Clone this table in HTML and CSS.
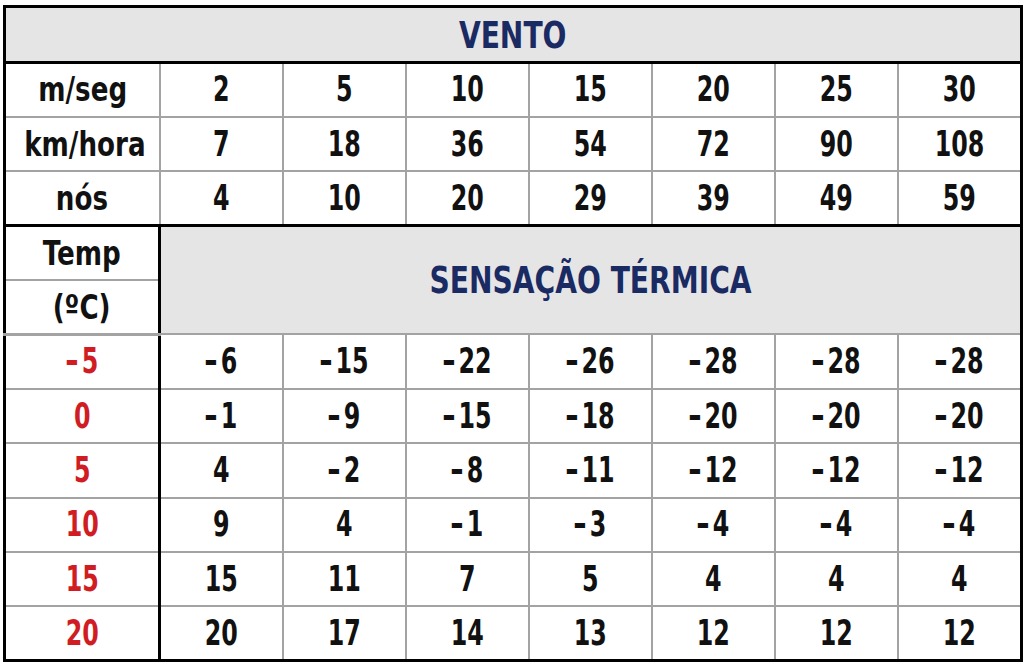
FILE: index.html
```html
<!DOCTYPE html>
<html lang="pt">
<head>
<meta charset="utf-8">
<title>Vento - Sensação Térmica</title>
<link rel="stylesheet" href="styles.css">
</head>
<body>
<table class="wind">
  <colgroup>
    <col class="c-label">
    <col class="c-val"><col class="c-val"><col class="c-val"><col class="c-val"><col class="c-val"><col class="c-val"><col class="c-last">
  </colgroup>
  <tr class="row head-row">
    <th colspan="8" class="title-cell thick-bottom"><span class="sq title">VENTO</span></th>
  </tr>
  <tr class="row">
    <th class="lbl"><span class="sq lab">m/seg</span></th>
    <td><span class="sq">2</span></td><td><span class="sq">5</span></td><td><span class="sq">10</span></td><td><span class="sq">15</span></td><td><span class="sq">20</span></td><td><span class="sq">25</span></td><td><span class="sq">30</span></td>
  </tr>
  <tr class="row">
    <th class="lbl"><span class="sq lab">km/hora</span></th>
    <td><span class="sq">7</span></td><td><span class="sq">18</span></td><td><span class="sq">36</span></td><td><span class="sq">54</span></td><td><span class="sq">72</span></td><td><span class="sq">90</span></td><td><span class="sq">108</span></td>
  </tr>
  <tr class="row thick-row">
    <th class="lbl"><span class="sq lab">nós</span></th>
    <td><span class="sq">4</span></td><td><span class="sq">10</span></td><td><span class="sq">20</span></td><td><span class="sq">29</span></td><td><span class="sq">39</span></td><td><span class="sq">49</span></td><td><span class="sq">59</span></td>
  </tr>
  <tr class="row">
    <th class="lbl divide"><span class="sq lab">Temp</span></th>
    <th colspan="7" rowspan="2" class="title-cell"><span class="sq title">SENSAÇÃO TÉRMICA</span></th>
  </tr>
  <tr class="row unit-row">
    <th class="lbl divide"><span class="sq lab">(ºC)</span></th>
  </tr>
  <tr class="row">
    <th class="lbl divide red"><span class="sq"><span class="m">-</span>5</span></th>
    <td><span class="sq"><span class="m">-</span>6</span></td><td><span class="sq"><span class="m">-</span>15</span></td><td><span class="sq"><span class="m">-</span>22</span></td><td><span class="sq"><span class="m">-</span>26</span></td><td><span class="sq"><span class="m">-</span>28</span></td><td><span class="sq"><span class="m">-</span>28</span></td><td><span class="sq"><span class="m">-</span>28</span></td>
  </tr>
  <tr class="row">
    <th class="lbl divide red"><span class="sq">0</span></th>
    <td><span class="sq"><span class="m">-</span>1</span></td><td><span class="sq"><span class="m">-</span>9</span></td><td><span class="sq"><span class="m">-</span>15</span></td><td><span class="sq"><span class="m">-</span>18</span></td><td><span class="sq"><span class="m">-</span>20</span></td><td><span class="sq"><span class="m">-</span>20</span></td><td><span class="sq"><span class="m">-</span>20</span></td>
  </tr>
  <tr class="row">
    <th class="lbl divide red"><span class="sq">5</span></th>
    <td><span class="sq">4</span></td><td><span class="sq"><span class="m">-</span>2</span></td><td><span class="sq"><span class="m">-</span>8</span></td><td><span class="sq"><span class="m">-</span>11</span></td><td><span class="sq"><span class="m">-</span>12</span></td><td><span class="sq"><span class="m">-</span>12</span></td><td><span class="sq"><span class="m">-</span>12</span></td>
  </tr>
  <tr class="row">
    <th class="lbl divide red"><span class="sq">10</span></th>
    <td><span class="sq">9</span></td><td><span class="sq">4</span></td><td><span class="sq"><span class="m">-</span>1</span></td><td><span class="sq"><span class="m">-</span>3</span></td><td><span class="sq"><span class="m">-</span>4</span></td><td><span class="sq"><span class="m">-</span>4</span></td><td><span class="sq"><span class="m">-</span>4</span></td>
  </tr>
  <tr class="row">
    <th class="lbl divide red"><span class="sq">15</span></th>
    <td><span class="sq">15</span></td><td><span class="sq">11</span></td><td><span class="sq">7</span></td><td><span class="sq">5</span></td><td><span class="sq">4</span></td><td><span class="sq">4</span></td><td><span class="sq">4</span></td>
  </tr>
  <tr class="row">
    <th class="lbl divide red"><span class="sq">20</span></th>
    <td><span class="sq">20</span></td><td><span class="sq">17</span></td><td><span class="sq">14</span></td><td><span class="sq">13</span></td><td><span class="sq">12</span></td><td><span class="sq">12</span></td><td><span class="sq">12</span></td>
  </tr>
</table>
</body>
</html>
```

FILE: styles.css
```css
html, body {
  margin: 0;
  padding: 0;
  background: #ffffff;
}

body {
  padding: 5px 0 0 3px;
  font-family: "DejaVu Sans", "Liberation Sans", sans-serif;
  font-weight: bold;
  color: #111111;
}

.wind {
  border-collapse: collapse;
  table-layout: fixed;
  width: 1020px;
  border: 3px solid #000000;
}

.c-label { width: 155px; }
.c-val { width: 123px; }
.c-last { width: 124px; }

.wind th,
.wind td {
  border: 2px solid #a3a3a3;
  padding: 0;
  text-align: center;
  vertical-align: middle;
  font-size: 35px;
  font-weight: bold;
  line-height: 1;
  white-space: nowrap;
  overflow: visible;
}

.row {
  height: 54.4px;
}

.head-row {
  height: 56px;
}

.title-cell {
  background: #e6e5e6;
  color: #1a2a63;
}

.thick-bottom {
  border-bottom: 3px solid #000000 !important;
}

.thick-row th,
.thick-row td {
  border-bottom: 3px solid #000000;
}

.wind .divide {
  border-right: 3px solid #000000;
}

.unit-row th {
  border-bottom-width: 3px;
}

.red {
  color: #d01d24;
}

.sq {
  display: inline-block;
  transform: scaleX(0.68);
  transform-origin: center;
}

.m {
  display: inline-block;
  transform: scaleX(1.4);
  margin: 0 7px 0 2px;
}

.sq.lab {
  font-size: 34px;
  transform: scaleX(0.77);
}

.sq.title {
  font-size: 38px;
  transform: scaleX(0.74);
}
```
